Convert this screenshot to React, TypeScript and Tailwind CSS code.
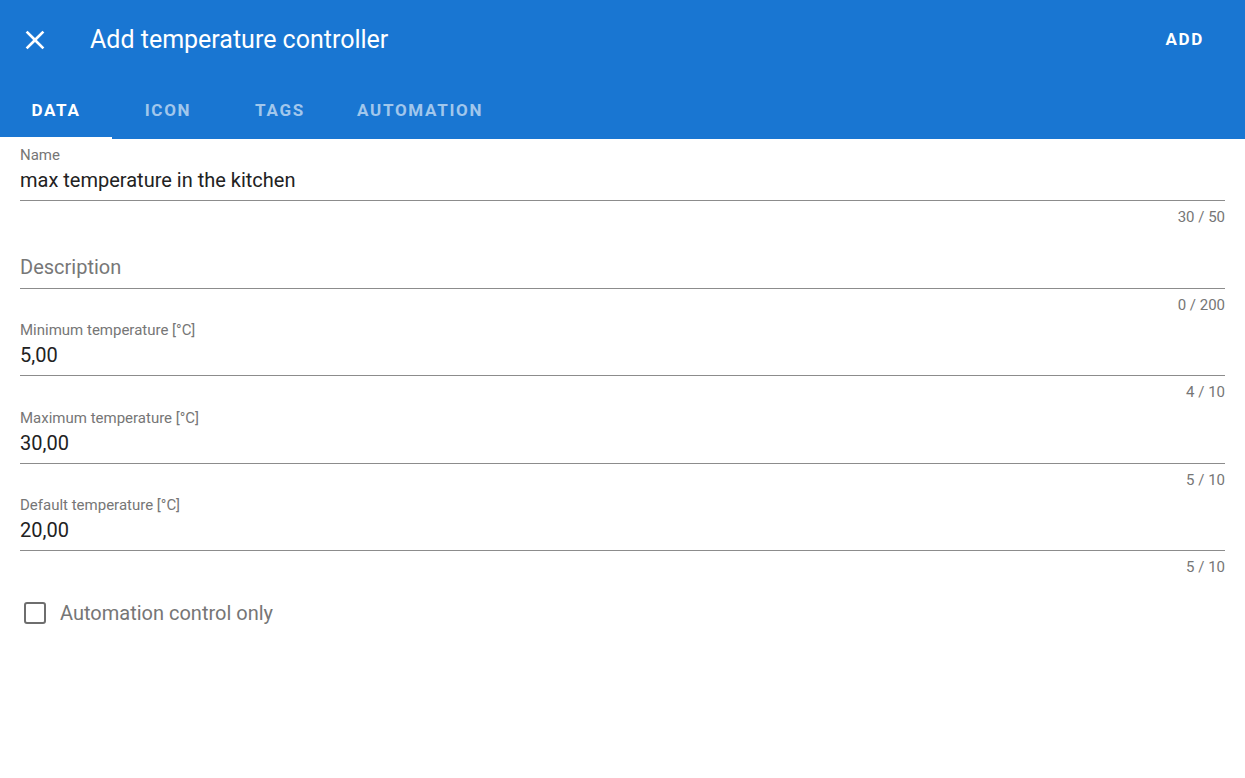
import { useState } from "react";

const fields = [
  { label: "Name", value: "max temperature in the kitchen", counter: "30 / 50" },
  { label: "", placeholder: "Description", value: "", counter: "0 / 200" },
  { label: "Minimum temperature [°C]", value: "5,00", counter: "4 / 10" },
  { label: "Maximum temperature [°C]", value: "30,00", counter: "5 / 10" },
  { label: "Default temperature [°C]", value: "20,00", counter: "5 / 10" },
];

const tabs = ["Data", "Icon", "Tags", "Automation"];

export default function App() {
  const [active, setActive] = useState(0);
  const [checked, setChecked] = useState(false);

  return (
    <div className="w-[1245px] h-[778px] bg-white font-['Roboto',sans-serif] overflow-hidden">
      <header className="bg-[#1976d2] text-white">
        <div className="h-[80px] flex items-center">
          <button className="ml-[19px] w-[32px] h-[32px] flex items-center justify-center">
            <svg viewBox="0 0 24 24" className="w-[32px] h-[32px]" fill="currentColor">
              <path d="M19 6.41L17.59 5 12 10.59 6.41 5 5 6.41 10.59 12 5 17.59 6.41 19 12 13.41 17.59 19 19 17.59 13.41 12z" />
            </svg>
          </button>
          <h1 className="ml-[39px] text-[25px] font-normal">Add temperature controller</h1>
          <button className="ml-auto mr-[41px] text-[17px] font-bold tracking-[0.1em]">ADD</button>
        </div>
        <nav className="flex h-[59px] pt-[3px]">
          {tabs.map((t, i) => (
            <button
              key={t}
              onClick={() => setActive(i)}
              className={`relative min-w-[112px] px-[21px] uppercase text-[17px] font-bold tracking-[0.1em] ${
                active === i ? "text-white" : "text-white/60"
              }`}
            >
              {t}
              {active === i && <span className="absolute left-0 right-0 bottom-0 h-[2px] bg-white" />}
            </button>
          ))}
        </nav>
      </header>

      <main className="px-[20px] pt-[6px]">
        {fields.map((f, i) => (
          <div key={i} className="h-[87.5px]">
            <div className="h-[20px] text-[15px] leading-[20px] text-[#767676]">{f.label}</div>
            <div className="h-[36px] border-b border-[#8c8c8c]">
              {f.value ? (
                <div className="text-[20px] leading-[30px] text-[#222]">{f.value}</div>
              ) : (
                <div className="text-[20px] leading-[28px] text-[#777]">{f.placeholder}</div>
              )}
            </div>
            <div className="mt-[6px] text-right text-[15px] leading-[20px] text-[#767676]">{f.counter}</div>
          </div>
        ))}

        <label className="flex items-center h-[36px] mt-[12px] cursor-pointer" onClick={() => setChecked(!checked)}>
          <span
            className={`ml-[4px] w-[22px] h-[22px] rounded-[3px] border-2 ${
              checked ? "bg-[#1976d2] border-[#1976d2]" : "border-[#6e6e6e]"
            }`}
          />
          <span className="ml-[14px] text-[20px] text-[#767676]">Automation control only</span>
        </label>
      </main>
    </div>
  );
}
